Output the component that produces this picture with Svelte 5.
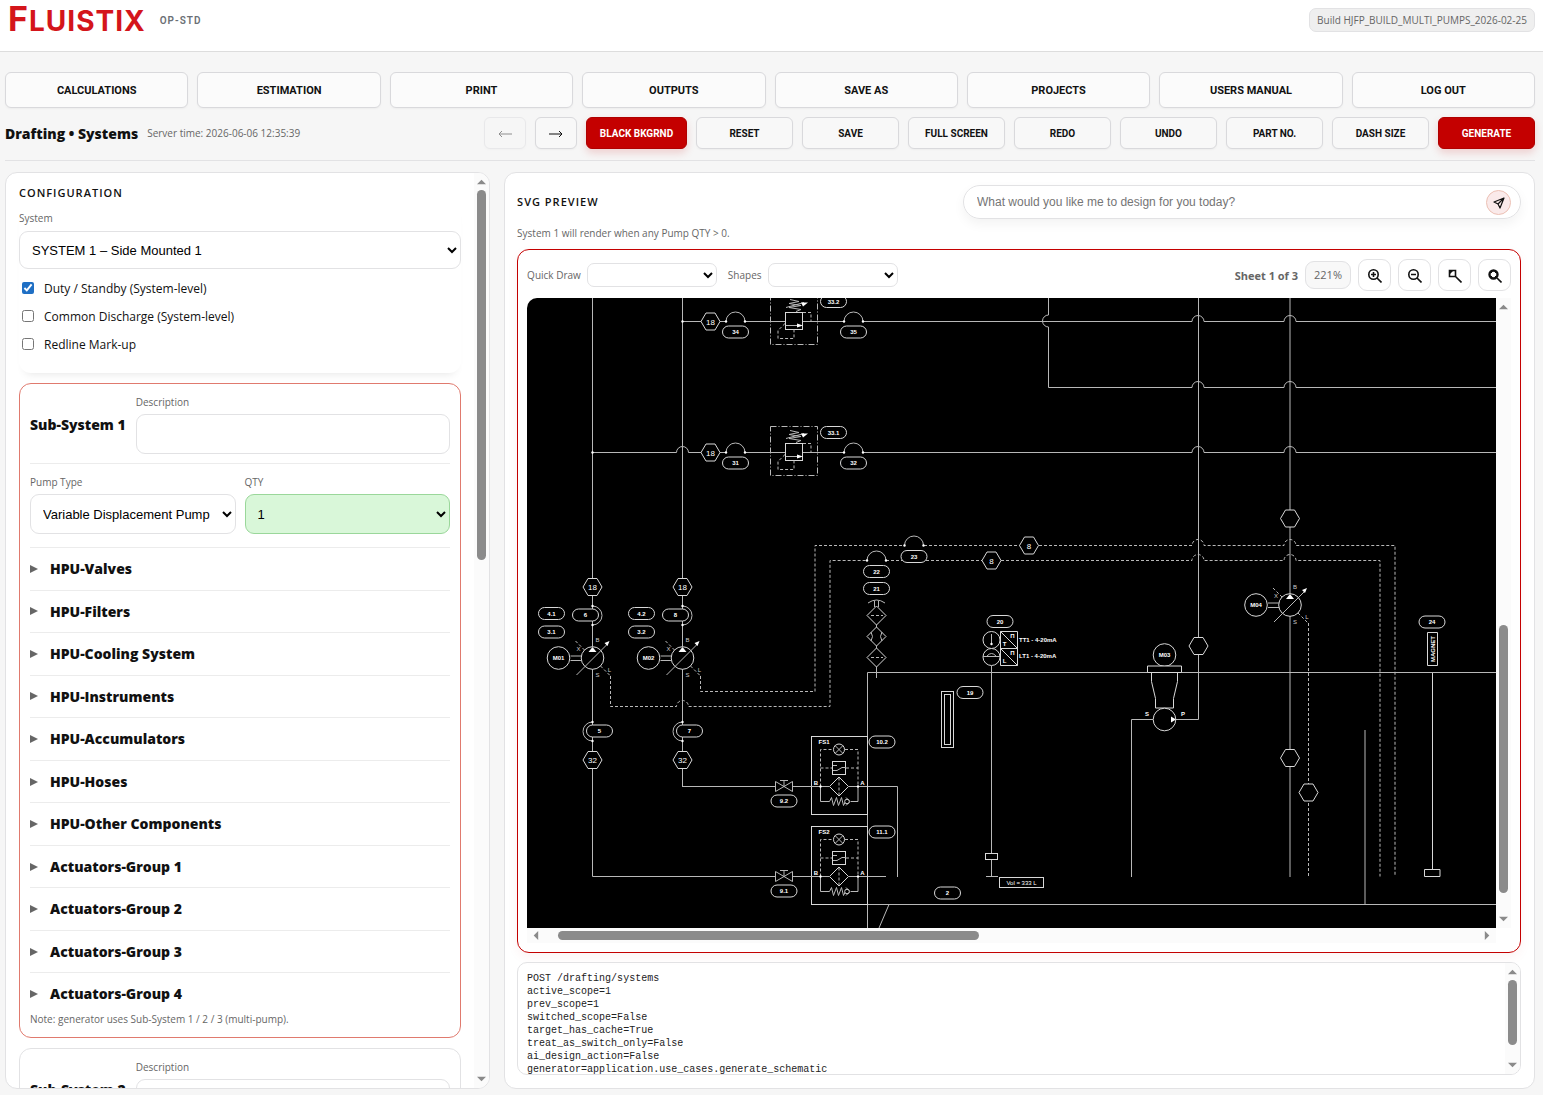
<script lang="ts">
  type Tag = [x: number, y: number, label: string];

  const navItems = [
    "Calculations",
    "Estimation",
    "Print",
    "Outputs",
    "Save as",
    "Projects",
    "Users manual",
    "Log out",
  ];

  const actions = [
    { label: "Black bkgrnd", primary: true },
    { label: "Reset" },
    { label: "Save" },
    { label: "Full screen" },
    { label: "Redo" },
    { label: "Undo" },
    { label: "Part no." },
    { label: "Dash size" },
    { label: "Generate", primary: true },
  ];

  const sections = [
    "HPU-Valves",
    "HPU-Filters",
    "HPU-Cooling System",
    "HPU-Instruments",
    "HPU-Accumulators",
    "HPU-Hoses",
    "HPU-Other Components",
    "Actuators-Group 1",
    "Actuators-Group 2",
    "Actuators-Group 3",
    "Actuators-Group 4",
  ];

  const log = `POST /drafting/systems
active_scope=1
prev_scope=1
switched_scope=False
target_has_cache=True
treat_as_switch_only=False
ai_design_action=False
generator=application.use_cases.generate_schematic`;

  let dutyStandby = $state(true);
  let commonDischarge = $state(false);
  let redline = $state(false);
  let prompt = $state("");

  // Item balloons, by centre point
  const pills: Tag[] = [
    [735.5, 332, "34"],
    [853.5, 332, "35"],
    [833.5, 301.5, "33.2"],
    [735.5, 463, "31"],
    [853.5, 463, "32"],
    [833.5, 432.5, "33.1"],
    [914, 556.5, "23"],
    [876.5, 571.5, "22"],
    [876.5, 588.5, "21"],
    [1000, 621.5, "20"],
    [970, 692.5, "19"],
    [882, 742, "10.2"],
    [882, 832, "11.1"],
    [784, 801, "9.2"],
    [784, 891, "9.1"],
    [947.5, 893, "2"],
    [1432, 622, "24"],
  ];

  // Pipe size marks
  const hexes: Tag[] = [
    [710.5, 321.5, "18"],
    [710.5, 452.5, "18"],
    [1029, 545.5, "8"],
    [991.5, 560.5, "8"],
    [1290, 518.5, ""],
    [1198.5, 646, ""],
    [1290, 758, ""],
    [1308.5, 792.5, ""],
  ];

  const pumpLines = [
    { x: 592.5, motor: "M01", top: "4.1", low: "3.1", out: "6", inlet: "5" },
    { x: 682.5, motor: "M02", top: "4.2", low: "3.2", out: "8", inlet: "7" },
  ];

  const filters = [
    { y: 786.5, name: "FS1" },
    { y: 876.5, name: "FS2" },
  ];

  const arcs = [
    [735.5, 321.5],
    [853.5, 321.5],
    [735.5, 452.5],
    [853.5, 452.5],
    [914, 545.5],
    [876.5, 560.5],
  ];
</script>

{#snippet scrollbar(start: number, size: number, horizontal = false)}
  <div class="scrollbar" class:horizontal aria-hidden="true">
    <svg class="scroll-arrow" viewBox="0 0 10 10">
      <path d={horizontal ? "M8 0v10L3 5z" : "M0 8h10L5 3z"} />
    </svg>
    <div class="scroll-track">
      <div style="flex: {start} 0 0"></div>
      <div class="scroll-thumb" style="flex: {size} 0 0"></div>
      <div style="flex: {100 - start - size} 0 0"></div>
    </div>
    <svg class="scroll-arrow" viewBox="0 0 10 10">
      <path d={horizontal ? "M2 0v10l5-5z" : "M0 2h10L5 7z"} />
    </svg>
  </div>
{/snippet}

{#snippet pill(x: number, y: number, label: string)}
  <rect class="sym" x={x - 13} y={y - 6} width="26" height="12" rx="6" />
  <text class="tag" {x} y={y + 2}>{label}</text>
{/snippet}

{#snippet hex(x: number, y: number, label: string)}
  <path class="sym" d="M{x - 9.5} {y}l5-8.5h9l5 8.5-5 8.5h-9z" />
  <text class="size" {x} y={y + 3}>{label}</text>
{/snippet}

{#snippet dot(x: number, y: number)}
  <circle class="dot" cx={x} cy={y} r="1.2" />
{/snippet}

{#snippet pump(x: number, y: number, motor: string)}
  <path class="line" d="M{x - 22} {y - 2}h11M{x - 22} {y + 2.5}h11" />
  <circle class="sym" cx={x - 34} cy={y} r="11.3" />
  <circle class="sym" cx={x} cy={y} r="11.3" />
  <path class="line" d="M{x - 16} {y + 17}l31-31" />
  <path class="dot" d="M{x + 17} {y - 17}l-2 5-3-3zM{x} {y - 11}l4 5h-8z" />
  <path class="dash" d="M{x - 17} {y - 17}l9 9M{x + 8} {y + 8}l10 10" />
  <text class="tag" x={x - 34} y={y + 2}>{motor}</text>
  <text class="port" x={x + 5} y={y - 16}>B</text>
  <text class="port" x={x - 14} y={y - 7}>X</text>
  <text class="port" x={x + 5} y={y + 19}>S</text>
  <text class="port" x={x + 17} y={y + 14}>L</text>
{/snippet}

{#snippet relief(y: number)}
  <rect class="chain" x="770.5" y={y - 26} width="47" height="49" />
  <rect class="sym" x="785.5" y={y - 9} width="17" height="17" />
  <path class="line" d="M786 {y + 4}h14M786 {y - 14}l18-5M790 {y - 22}l9 2-10 2 12 2-12 2 12 2-5 2" />
  <path class="dot" d="M803 {y + 4}l-6-2v4zM808 {y - 19}l-7 0 2 4z" />
  <path class="dash" d="M803 {y - 9}h8v9M785 {y + 2}l-7 7v8h16v-9" />
{/snippet}

{#snippet filter(y: number, name: string)}
  <rect class="sym" x="811.5" y={y - 50} width="56" height="78" />
  <path class="line" d="M775 {y}h-93M793 {y}h36M849 {y}h18" />
  <path class="line" d="M775.5 {y - 5}v10l17-10v10zM784 {y}v-6M780 {y - 6}h8" />
  <path class="dash" d="M820.5 {y}v-37h12M845 {y - 37}h13v37M820.5 {y - 18.5}h12M846 {y - 18.5}h12" />
  <circle class="sym" cx="839" cy={y - 37} r="5.5" />
  <path class="line" d="M835 {y - 41}l8 8M843 {y - 41}l-8 8" />
  <rect class="sym" x="832.5" y={y - 25} width="13" height="13" />
  <path class="line" d="M833 {y - 21}h4M833 {y - 16}h4l5-3h4" />
  <path class="sym" d="M839 {y - 9.5}l9.5 9.5-9.5 9.5-9.5-9.5z" />
  <path class="dash" d="M839 {y - 9}v18" />
  <path class="line" d="M820.5 {y}v15h9l2-4 2 8 3-8 2 8 3-8 2 8 2-4M851 {y + 15}h7v-15M846 {y + 11}l4 4-4 4" />
  <circle class="sym" cx="847" cy={y + 15} r="2.3" />
  {@render dot(820.5, y)}
  {@render dot(858, y)}
  <text class="tag" x="824" y={y - 43}>{name}</text>
  <text class="tag" x="816" y={y - 2}>B</text>
  <text class="tag" x="862.5" y={y - 2}>A</text>
{/snippet}

{#snippet subSystem(index: number)}
  <div class="sub-head">
    <h3>Sub-System {index}</h3>
    <label class="field">
      <span>Description</span>
      <input type="text" />
    </label>
  </div>
{/snippet}

<div class="app">
  <header class="brand-bar">
    <div class="brand">
      <a class="logo" href="#home" aria-label="Fluistix"><b>F</b>LUISTIX</a>
      <span class="edition">OP-STD</span>
    </div>
    <span class="build">Build HJFP_BUILD_MULTI_PUMPS_2026-02-25</span>
  </header>

  <nav class="main-nav">
    {#each navItems as item (item)}
      <button type="button">{item}</button>
    {/each}
  </nav>

  <div class="toolbar">
    <h1>Drafting • Systems</h1>
    <span class="server-time">Server time: 2026-06-06 12:35:39</span>
    <div class="actions">
      <button type="button" class="arrow" disabled aria-label="Previous sheet">
        <svg viewBox="0 0 14 8"><path d="M14 4H1M4 1 1 4l3 3" /></svg>
      </button>
      <button type="button" class="arrow" aria-label="Next sheet">
        <svg viewBox="0 0 14 8"><path d="M0 4h13M10 1l3 3-3 3" /></svg>
      </button>
      {#each actions as action (action.label)}
        <button type="button" class:primary={action.primary}>{action.label}</button>
      {/each}
    </div>
  </div>

  <main class="workspace">
    <section class="panel config">
      <div class="config-body">
        <h2>Configuration</h2>
        <div class="system-group">
          <label class="field">
            <span>System</span>
            <select>
              <option>SYSTEM 1 – Side Mounted 1</option>
            </select>
          </label>
          <label class="check"><input type="checkbox" bind:checked={dutyStandby} />Duty / Standby (System-level)</label>
          <label class="check"><input type="checkbox" bind:checked={commonDischarge} />Common Discharge (System-level)</label>
          <label class="check"><input type="checkbox" bind:checked={redline} />Redline Mark-up</label>
        </div>

        <div class="sub-card active">
          {@render subSystem(1)}
          <div class="pump-row">
            <label class="field">
              <span>Pump Type</span>
              <select><option>Variable Displacement Pump</option></select>
            </label>
            <label class="field">
              <span>QTY</span>
              <select class="qty"><option>1</option></select>
            </label>
          </div>
          {#each sections as section (section)}
            <details>
              <summary><i></i>{section}</summary>
            </details>
          {/each}
          <p class="note">Note: generator uses Sub-System 1 / 2 / 3 (multi-pump).</p>
        </div>

        <div class="sub-card">
          {@render subSystem(2)}
        </div>
      </div>
      {@render scrollbar(0, 42)}
    </section>

    <section class="panel preview">
      <div class="preview-head">
        <h2>SVG Preview</h2>
        <form class="prompt" onsubmit={(e) => e.preventDefault()}>
          <input
            type="text"
            aria-label="Design prompt"
            placeholder="What would you like me to design for you today?"
            bind:value={prompt}
          />
          <button type="submit" aria-label="Send">
            <svg viewBox="0 0 24 24"><path d="M22 2 2 10l8 4 4 8zM22 2 10 14" /></svg>
          </button>
        </form>
      </div>
      <p class="hint">System 1 will render when any Pump QTY &gt; 0.</p>

      <div class="viewer">
        <div class="viewer-bar">
          <label>Quick Draw <select><option></option></select></label>
          <label>Shapes <select><option></option></select></label>
          <strong>Sheet 1 of 3</strong>
          <span class="zoom-level">221%</span>
          <button type="button" aria-label="Zoom in">
            <svg viewBox="0 0 14 14"><circle cx="5.5" cy="5.5" r="4.7" /><path d="M9 9l4.5 4.5M5.5 3v5M3 5.5h5" /></svg>
          </button>
          <button type="button" aria-label="Zoom out">
            <svg viewBox="0 0 14 14"><circle cx="5.5" cy="5.5" r="4.7" /><path d="M9 9l4.5 4.5M3 5.5h5" /></svg>
          </button>
          <button type="button" aria-label="Zoom to area">
            <svg viewBox="0 0 14 14"><path d="M1.5 1.5h6v6h-6zM7.5 7.5l6 6" /><path class="solid" d="M1 1h5L1 6z" /></svg>
          </button>
          <button type="button" aria-label="Fit to view">
            <svg viewBox="0 0 14 14"><circle class="thick" cx="5.5" cy="5.5" r="4" /><path d="M9 9l4.5 4.5" /><path class="solid" d="M2 2h2v2H2zM7 2h2v2H7zM2 7h2v2H2zM7 7h2v2H7z" /></svg>
          </button>
        </div>

        <div class="canvas">
          <svg class="drawing" viewBox="527 298 969 630" preserveAspectRatio="xMinYMin slice" role="img" aria-label="Hydraulic schematic">
            <!-- pressure lines -->
            <path class="line" d="M592.5 298v578.5h90M682.5 298v148M682.5 446v341M682.5 321.5h44M745 321.5h99M863 321.5h329a6 6 0 0 1 12 0h80a6 6 0 0 1 12 0h200" />
            <path class="line" d="M592.5 452.5h84a6 6 0 0 1 12 0h38M745 452.5h99M863 452.5h329a6 6 0 0 1 12 0h80a6 6 0 0 1 12 0h200" />
            <path class="line" d="M1048.5 298v17a6 6 0 0 0 0 12v60.5h143.5a6 6 0 0 1 12 0h80a6 6 0 0 1 12 0h200" />
            <path class="line" d="M1198.5 298v421.5H1176M1290 298v579" />

            <!-- drain lines -->
            <path class="dash" d="M700.5 676v15.5H815V545.5h89M924 545.5h268a6 6 0 0 1 12 0h80a6 6 0 0 1 12 0h99v331" />
            <path class="dash" d="M610.5 676v30.5h66a6 6 0 0 1 12 0H830V560.5h37M886 560.5h306a6 6 0 0 1 12 0h80a6 6 0 0 1 12 0h84v316" />
            <path class="dash" d="M1308.5 623v254" />

            <!-- tank -->
            <path class="line" d="M867.5 928V672.5H1496M867.5 904.5H1496M889 904.5l-10 23.5M1365 730v174M897.5 877V786.5h-30M867 876.5h19" />

            {#each arcs as [x, y]}
              <path class="line" d="M{x - 9.5} {y}a9.5 9.5 0 0 1 19 0" />
              {@render dot(x - 9.5, y)}
              {@render dot(x + 9.5, y)}
            {/each}
            {@render dot(682.5, 321.5)}
            {@render dot(592.5, 452.5)}
            {@render relief(321.5)}
            {@render relief(452.5)}

            {#each filters as f (f.name)}
              {@render filter(f.y, f.name)}
            {/each}

            {#each pumpLines as p (p.motor)}
              <path class="line" d="M{p.x} 606a9.5 9.5 0 0 1 0 19M{p.x} 722a9.5 9.5 0 0 0 0 19" />
              {@render pump(p.x, 658, p.motor)}
              {@render hex(p.x, 587, "18")}
              {@render hex(p.x, 760, "32")}
              {@render pill(p.x - 41, 613.5, p.top)}
              {@render pill(p.x - 41, 632, p.low)}
              {@render pill(p.x - 7, 615, p.out)}
              {@render pill(p.x + 7, 731, p.inlet)}
              {@render dot(p.x, 606)}
              {@render dot(p.x, 625)}
              {@render dot(p.x, 722)}
              {@render dot(p.x, 741)}
            {/each}
            {@render pump(1290, 605, "M04")}

            <!-- air breather -->
            <path class="line" d="M868 603q8.500-6 17 0M874.5 601v6M878.5 601v6M876.5 625v2M876.5 646v2M876.5 667v11" />
            <path class="sym" d="M876.5 606l9.5 9.5-9.5 9.5-9.5-9.5zM876.5 627l9.5 9.5-9.5 9.5-9.5-9.5zM876.5 648l9.5 9.5-9.5 9.5-9.5-9.5z" />
            <path class="line" d="M871 632q3 4.500 0 9M882 632q-3 4.500 0 9" />
            <path class="dash" d="M871 615.5h12M871 657.5h12" />

            <!-- level and temperature transmitters -->
            <rect class="sym" x="941.5" y="691.5" width="12" height="56" />
            <rect class="sym" x="944.5" y="694.5" width="6" height="50" />
            <circle class="sym" cx="991.5" cy="640" r="8.5" />
            <circle class="sym" cx="991.5" cy="657" r="8.5" />
            <path class="line" d="M991.5 634v9M983 656.5h17M987 656q4.500-5 9 0M991.5 666v187M991.5 860v17M986 876.5h12" />
            {@render dot(991.5, 644)}
            <path class="sym" d="M1000.5 631.5h17v17h-17zl17 17M1000.5 648.5h17v17h-17zl17 17" />
            <text class="tag" x="1012.5" y="637.5">Π</text>
            <text class="tag" x="1004.5" y="645.5">T</text>
            <text class="tag" x="1012.5" y="655">Π</text>
            <text class="tag" x="1004.5" y="662.5">L</text>
            <text class="note-text" x="1019" y="642">TT1 - 4-20mA</text>
            <text class="note-text" x="1019" y="658">LT1 - 4-20mA</text>
            <rect class="sym" x="985.5" y="853.5" width="12" height="6" />
            <rect class="sym" x="999.5" y="877.5" width="44" height="10" />
            <text class="tag plain" x="1021.5" y="884.5">Vol = 333 L</text>

            <!-- transfer pump -->
            <circle class="sym" cx="1164.5" cy="655" r="11.3" />
            <text class="tag" x="1164.5" y="657">M03</text>
            <path class="sym" d="M1147.5 666h34v6.5h-34zM1151.5 672.5v9l4 17v9.5h18v-9.5l4-17v-9" />
            <circle class="sym" cx="1164.5" cy="719.5" r="11.3" />
            <path class="dot" d="M1176 719.5l-5-3v6z" />
            <path class="line" d="M1153 719.5h-21.5V877" />
            <text class="tag" x="1147" y="716">S</text>
            <text class="tag" x="1183" y="716">P</text>

            <!-- magnet -->
            <path class="sym" d="M1427.5 632.5h10v33h-10zM1424.5 869.5h15.5v7h-15.5zM1432.5 673v196" />
            <text class="tag" transform="translate(1435 649) rotate(-90)">MAGNET</text>

            {#each pills as [x, y, label]}
              {@render pill(x, y, label)}
            {/each}
            {#each hexes as [x, y, label]}
              {@render hex(x, y, label)}
            {/each}
          </svg>
          {@render scrollbar(52, 45)}
          {@render scrollbar(1.5, 45, true)}
        </div>
      </div>

      <div class="log">
        <pre>{log}</pre>
        {@render scrollbar(0, 84)}
      </div>
    </section>
  </main>
</div>

<style>
  :global(body) {
    background: #f6f6f6;
  }

  .app {
    --border: #e2e2e4;
    --accent: #c40000;
    --muted: #666;
    box-sizing: border-box;
    height: 100vh;
    min-height: 600px;
    display: flex;
    flex-direction: column;
    padding-bottom: 6px;
    font-family: "Open Sans", "Noto Sans", sans-serif;
    font-size: 12px;
    color: #111;
  }

  .app :is(button, input, select, form, h1, h2, h3, p, pre) {
    box-sizing: border-box;
    margin: 0;
  }

  .brand-bar {
    display: flex;
    justify-content: space-between;
    align-items: flex-start;
    height: 51px;
    padding: 0 8px;
    background: #fff;
    border-bottom: 1px solid #ddd;
  }

  .brand {
    display: flex;
    gap: 14px;
  }

  .logo {
    font-family: Inter, sans-serif;
    font-size: 28px;
    line-height: 38px;
    font-weight: 700;
    letter-spacing: 1px;
    color: #d4151b;
    text-decoration: none;
  }

  .logo b {
    font-size: 34px;
    font-weight: 700;
  }

  .edition {
    align-self: center;
    font-family: Roboto, sans-serif;
    font-size: 10px;
    font-weight: 600;
    letter-spacing: 1px;
    color: #6b7075;
  }

  .build {
    margin-top: 8px;
    padding: 0 7px;
    border: 1px solid var(--border);
    border-radius: 7px;
    background: #efefef;
    font-size: 10px;
    line-height: 22px;
    color: var(--muted);
  }

  .main-nav {
    display: grid;
    grid-template-columns: repeat(8, 1fr);
    gap: 9px;
    padding: 20px 8px 9px 5px;
  }

  .main-nav button,
  .actions button {
    border: 1px solid #d9d9dc;
    border-radius: 6px;
    background: #fbfbfb;
    color: #111;
    font-family: Roboto, sans-serif;
    font-size: 11px;
    font-weight: 700;
    text-transform: uppercase;
    box-shadow: 0 1px 2px rgb(0 0 0 / 4%);
  }

  .main-nav button {
    height: 36px;
  }

  .toolbar {
    display: flex;
    align-items: center;
    gap: 9px;
    margin: 0 8px 0 5px;
    padding-bottom: 11px;
    border-bottom: 1px solid var(--border);
  }

  h1,
  h3,
  summary {
    font-size: 14px;
    font-weight: 800;
  }

  .server-time {
    font-size: 10px;
    color: var(--muted);
  }

  .actions {
    display: flex;
    gap: 9px;
    margin-left: auto;
  }

  .actions button {
    width: 97px;
    height: 32px;
    padding: 0;
    background: #f8f8f8;
    font-size: 10px;
  }

  .actions .arrow {
    width: 42px;
  }

  .arrow:disabled {
    opacity: 0.45;
  }

  .arrow svg {
    width: 14px;
    fill: none;
    stroke: #111;
    vertical-align: middle;
  }

  .actions .primary {
    border-color: #b00000;
    background: var(--accent);
    color: #fff;
    box-shadow: 0 4px 8px rgb(196 0 0 / 16%);
  }

  .actions .arrow + .primary {
    width: 101px;
  }

  .workspace {
    flex: 1;
    min-height: 0;
    display: grid;
    grid-template-columns: minmax(0, 8fr) minmax(0, 17fr);
    gap: 14px;
    padding: 11px 8px 0 5px;
  }

  .panel {
    min-height: 0;
    display: flex;
    background: #fff;
    border: 1px solid var(--border);
    border-radius: 12px;
    overflow: hidden;
  }

  h2 {
    font-size: 11px;
    font-weight: 600;
    line-height: 16px;
    letter-spacing: 1px;
    text-transform: uppercase;
    color: #111;
  }

  .config-body {
    flex: 1;
    min-width: 0;
    overflow: hidden;
    padding: 12px 13px 0;
  }

  .field {
    display: flex;
    flex-direction: column;
    gap: 4px;
    min-width: 0;
    font-size: 10px;
    line-height: 16px;
    color: var(--muted);
  }

  .field input,
  .field select {
    width: 100%;
    height: 40px;
    padding: 0 0 0 8px;
    border: 1px solid var(--border);
    border-radius: 9px;
    background: #fff;
    color: #000;
    font-family: "Liberation Sans", Arial, sans-serif;
    font-size: 13px;
  }

  .system-group {
    padding: 9px 0 15px;
    border-radius: 12px;
    box-shadow: 0 7px 8px -6px rgb(0 0 0 / 10%);
  }

  .system-group .field {
    gap: 5px;
    margin-bottom: 5px;
  }

  .system-group select {
    height: 38px;
  }

  .check {
    display: flex;
    align-items: center;
    gap: 10px;
    height: 28px;
    padding-left: 3px;
  }

  .check input {
    width: 12px;
    height: 12px;
    accent-color: #1f6fc4;
  }

  .sub-card {
    margin-top: 10px;
    padding: 10px;
    border: 1px solid var(--border);
    border-radius: 12px;
  }

  .sub-card.active {
    border-color: #e07a6e;
  }

  .sub-head {
    display: flex;
    align-items: center;
    gap: 10px;
    padding-bottom: 9px;
    border-bottom: 1px solid #ececec;
  }

  .sub-head .field {
    flex: 1;
  }

  .pump-row {
    display: grid;
    grid-template-columns: 1fr 1fr;
    gap: 9px;
    padding: 10px 0 13px;
  }

  .field .qty {
    border-color: #9ad79a;
    background: #d9f7d9;
  }

  details {
    border-top: 1px solid #ececec;
  }

  summary {
    display: flex;
    align-items: center;
    gap: 12px;
    padding: 10px 0;
    line-height: 1.54;
  }

  summary i {
    border: 4px solid transparent;
    border-left: 8px solid #666;
    border-right: 0;
  }

  .note,
  .hint {
    font-size: 10px;
    line-height: 16px;
    color: var(--muted);
  }

  .app .note {
    margin-top: -4px;
  }

  .preview {
    flex-direction: column;
    padding: 12px 13px 13px 12px;
  }

  .preview-head {
    display: flex;
    justify-content: space-between;
    align-items: center;
  }

  .prompt {
    display: flex;
    align-items: center;
    flex: 0 1 558px;
    height: 34px;
    padding-right: 9px;
    border: 1px solid var(--border);
    border-radius: 17px;
    box-shadow: 0 5px 12px rgb(0 0 0 / 5%);
  }

  .prompt input {
    flex: 1;
    padding: 0 13px;
    border: 0;
    background: none;
    font-family: "Liberation Sans", Arial, sans-serif;
    font-size: 12px;
  }

  .prompt button {
    width: 25px;
    height: 25px;
    padding: 0;
    border: 1px solid #ecc0b4;
    border-radius: 50%;
    background: #faeaea;
  }

  .prompt svg {
    width: 12px;
    fill: none;
    stroke: #111;
    stroke-width: 2.4;
    stroke-linejoin: round;
    vertical-align: middle;
  }

  .hint {
    padding: 6px 0 8px;
  }

  .viewer {
    flex: 1;
    min-height: 0;
    display: flex;
    flex-direction: column;
    gap: 7px;
    padding: 9px;
    border: 1px solid var(--accent);
    border-radius: 12px;
    box-shadow: 0 4px 12px rgb(196 0 0 / 5%);
  }

  .viewer-bar {
    display: flex;
    align-items: center;
    gap: 7px;
    font-size: 11px;
    color: var(--muted);
  }

  .viewer-bar label {
    display: flex;
    align-items: center;
    gap: 6px;
    margin-right: 4px;
    font-size: 10px;
  }

  .viewer-bar select {
    width: 130px;
    height: 24px;
    border: 1px solid var(--border);
    border-radius: 7px;
    background: #fff;
  }

  .viewer-bar strong {
    margin-left: auto;
  }

  .zoom-level {
    padding: 0 8px;
    border: 1px solid var(--border);
    border-radius: 9px;
    background: #f8f8f8;
    line-height: 26px;
  }

  .viewer-bar button {
    width: 33px;
    height: 32px;
    padding: 0;
    border: 1px solid var(--border);
    border-radius: 9px;
    background: #fff;
  }

  .viewer-bar button svg {
    width: 14px;
    fill: none;
    stroke: #111;
    stroke-width: 1.6;
    vertical-align: middle;
  }

  .viewer-bar .solid {
    fill: #111;
    stroke: none;
  }

  .viewer-bar .thick {
    stroke-width: 2.4;
  }

  .canvas {
    flex: 1;
    min-height: 0;
    display: grid;
    grid-template: minmax(0, 1fr) 15px / minmax(0, 1fr) 15px;
    overflow: hidden;
    border-top-left-radius: 10px;
  }

  .drawing {
    width: 100%;
    height: 100%;
    background: #000;
    font-family: "Liberation Sans", Arial, sans-serif;
  }

  .line,
  .sym,
  .dash,
  .chain {
    fill: none;
    stroke: #b8b8b8;
  }

  .sym {
    fill: #000;
    stroke: #d8d8d8;
  }

  .dash {
    stroke-dasharray: 3 2;
  }

  .chain {
    stroke-dasharray: 6 2 1 2;
  }

  .dot {
    fill: #fff;
  }

  .drawing text {
    fill: #fff;
    text-anchor: middle;
  }

  .drawing .tag,
  .drawing .note-text {
    font-size: 6px;
    font-weight: 700;
  }

  .drawing .plain {
    font-weight: 400;
  }

  .drawing .note-text {
    text-anchor: start;
  }

  .drawing .port {
    font-size: 6px;
    fill: #ccc;
  }

  .drawing .size {
    font-size: 8px;
  }

  .scrollbar {
    flex: none;
    display: flex;
    flex-direction: column;
    align-items: center;
    width: 15px;
    padding: 4px 0;
    box-sizing: border-box;
    background: #fbfbfb;
  }

  .scrollbar.horizontal {
    flex-direction: row;
    width: auto;
    padding: 0 4px;
  }

  .scroll-arrow {
    flex: none;
    width: 9px;
    height: 9px;
    fill: #8a8a8a;
  }

  .scroll-track {
    flex: 1;
    display: flex;
    flex-direction: column;
    width: 9px;
    margin: 4px 0;
  }

  .horizontal .scroll-track {
    flex-direction: row;
    width: auto;
    height: 9px;
    margin: 0 4px;
  }

  .scroll-thumb {
    border-radius: 5px;
    background: #8b8b8b;
  }

  .log {
    display: flex;
    height: 113px;
    box-sizing: border-box;
    margin-top: 9px;
    border: 1px solid var(--border);
    border-radius: 10px;
    overflow: hidden;
  }

  pre {
    flex: 1;
    padding: 9px;
    overflow: hidden;
    font-family: "Liberation Mono", monospace;
    font-size: 10px;
    line-height: 13px;
    color: #222;
  }
</style>
